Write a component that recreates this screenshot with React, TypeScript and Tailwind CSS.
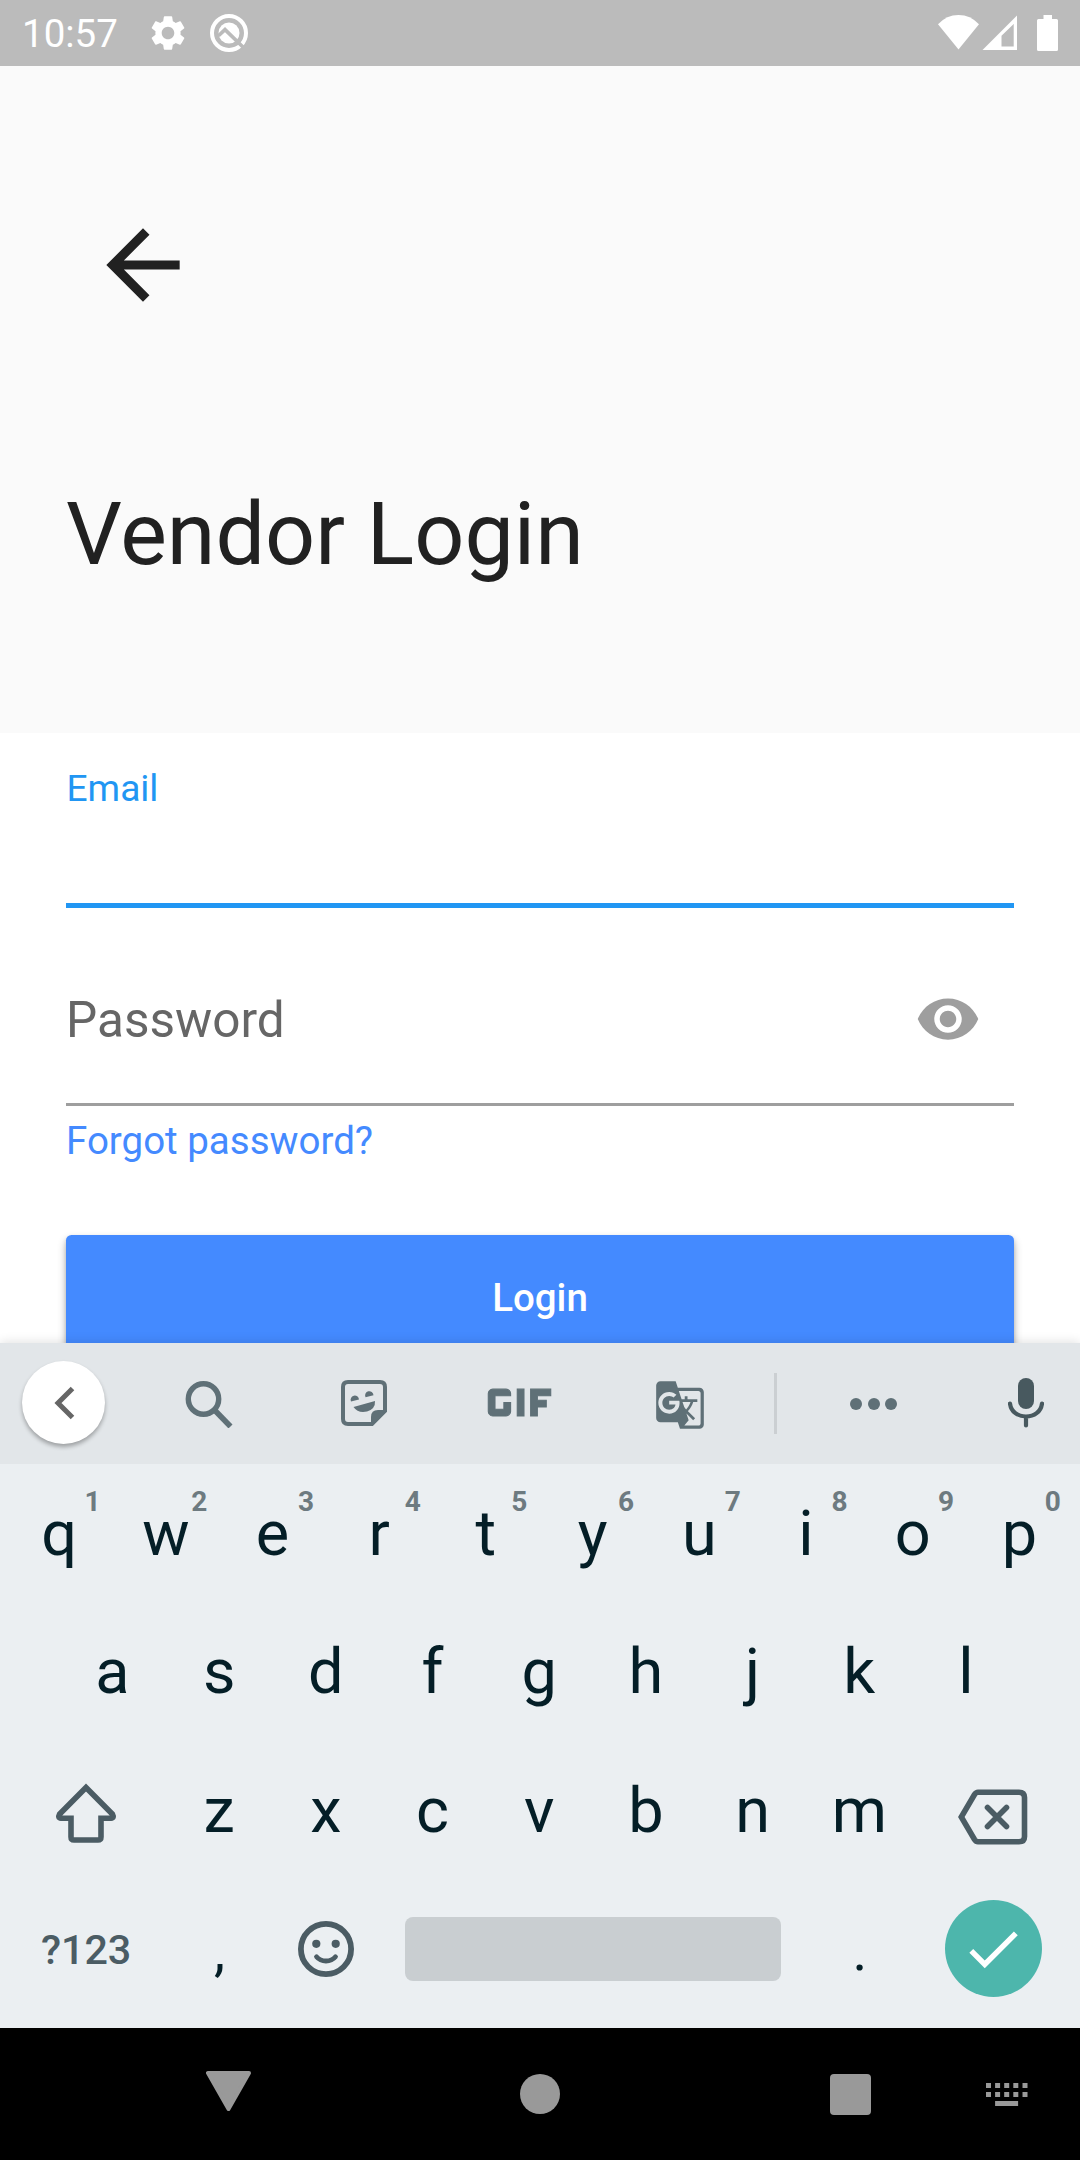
import type { ReactNode } from "react";
import { MdArrowBack, MdDone, MdGTranslate, MdGif, MdSettings, MdVisibility } from "react-icons/md";

const TOP_ROW = ["q", "w", "e", "r", "t", "y", "u", "i", "o", "p"];
const HINTS = ["1", "2", "3", "4", "5", "6", "7", "8", "9", "0"];
const HOME_ROW = ["a", "s", "d", "f", "g", "h", "j", "k", "l"];
const BOTTOM_ROW = ["z", "x", "c", "v", "b", "n", "m"];

function Key({ label, hint }: { label: string; hint?: string }) {
  return (
    <button className="relative flex h-full w-[106.7px] items-center justify-center text-[63px] leading-none text-[#041e27]">
      {label}
      {hint && (
        <span className="absolute left-1/2 top-[24px] ml-[18.5px] w-[30px] text-center text-[28px] font-bold leading-none text-[#6d7a80]">
          {hint}
        </span>
      )}
    </button>
  );
}

function PunctuationKey({ label }: { label: string }) {
  return (
    <button className="flex h-full w-[106.7px] items-center justify-center pl-px pt-[5px] text-[56px] leading-none text-[#041e27]">
      {label}
    </button>
  );
}

function KeyRow({ children }: { children: ReactNode }) {
  return <div className="flex h-[138.5px] items-center justify-center pr-[1.5px]">{children}</div>;
}

function StatusBar() {
  return (
    <header className="flex h-[66px] items-center bg-[#bbbbbb] pl-[22px] pr-[21px] text-white">
      <span className="pt-[3px] text-[38.5px] leading-none">10:57</span>
      <MdSettings className="ml-[29.5px] size-[42px]" />
      <svg className="ml-[19.5px] size-[40px]" viewBox="0 0 40 40">
        <circle cx="20" cy="20" r="17" fill="none" stroke="currentColor" strokeWidth="4" />
        <circle cx="20" cy="20" r="10.5" fill="currentColor" />
        <path d="M9.5 22.8L16 16.6L36 36" fill="none" stroke="#bbbbbb" strokeWidth="3.6" />
      </svg>
      <svg className="ml-auto h-[36px] w-[121px]" viewBox="0 0 121 36">
        <path d="M0 9.3Q8.500 0 20.500 0T41 9.300L20.500 34.500Z" fill="currentColor" />
        <path
          fillRule="evenodd"
          d="M79 0.500V35H44.500ZM75.700 9L63.500 20.700V31.500H75.700Z"
          fill="currentColor"
        />
        <path
          d="M105.500 0H114V4H118.500Q120 4 120 5.500V34.500Q120 36 118.500 36H100.500Q99 36 99 34.500V5.500Q99 4 100.500 4H105.500Z"
          fill="currentColor"
        />
      </svg>
    </header>
  );
}

function LoginScreen() {
  return (
    <main className="h-[1277px] overflow-hidden">
      <section className="h-[667px] bg-[#fafafa] pl-[66px] pt-[144px] text-[#212121]">
        <button aria-label="Back" className="ml-[22px] block">
          <MdArrowBack className="size-[110px]" />
        </button>
        <h1 className="mt-[170px] text-[88px] leading-none">Vendor Login</h1>
      </section>
      <section className="px-[66px] pt-[37px]">
        <div className="h-[138px] border-b-[5.500px] border-[#2196f3]">
          <span className="block pl-[0.500px] text-[37.125px] leading-none text-[#2196f3]">Email</span>
        </div>
        <div className="flex h-[198px] justify-between border-b-[3px] border-[#9e9e9e] pr-[33px] pt-[78px]">
          <span className="mt-[10px] text-[49.500px] leading-none text-[#666666]">Password</span>
          <MdVisibility className="size-[66px] text-[#9e9e9e]" />
        </div>
        <a className="mt-[16px] block text-[38.500px] leading-none text-[#448aff]">Forgot password?</a>
        <button className="mt-[74px] flex h-[132px] w-full items-center justify-center rounded-[5.500px] bg-[#448aff] pb-[4px] text-[38.500px] font-medium leading-none text-white shadow-[0_5px_8px_rgba(0,0,0,0.3),0_2px_4px_rgba(0,0,0,0.12)]">
          Login
        </button>
      </section>
    </main>
  );
}

function Toolbar() {
  return (
    <div className="flex h-[121px] items-center bg-[#e2e6e9] text-[#5f7077]">
      <div className="flex w-[127px] justify-center pb-[2px]">
        <button className="flex size-[83px] items-center justify-center rounded-full bg-white text-[#666666] shadow-[0_3px_4px_rgba(0,0,0,0.3)]">
          <svg className="h-[34px] w-[22px]" viewBox="0 0 22 34">
            <path d="M19.500 2.500L5 17L19.500 31.500" fill="none" stroke="currentColor" strokeWidth="5" />
          </svg>
        </button>
      </div>
      <div className="flex w-[164px] justify-center">
        <svg className="size-[48px]" viewBox="0 0 48 48">
          <circle cx="18.500" cy="19" r="15.200" fill="none" stroke="currentColor" strokeWidth="5.400" />
          <path d="M30 30.500L45.500 46.500" fill="none" stroke="currentColor" strokeWidth="5.600" />
        </svg>
      </div>
      <div className="flex w-[146px] justify-center pb-px">
        <svg className="size-[46px]" viewBox="0 0 46 46">
          <path
            d="M7 2H39Q44 2 44 7V31L31 44H7Q2 44 2 39V7Q2 2 7 2Z"
            fill="none"
            stroke="currentColor"
            strokeWidth="4"
          />
          <path d="M30 45V37Q30 30 37 30H45V32L32 45Z" fill="currentColor" />
          <path d="M10 21.500A4.200 4.200 0 1 1 18 19.500ZM24.500 17.200A4.200 4.200 0 1 1 32.500 15.200Z" fill="currentColor" />
          <path d="M12.500 27L34 21Q34.500 29 26 31.500Q17 33.500 12.500 27Z" fill="currentColor" />
        </svg>
      </div>
      <div className="flex w-[166px] justify-center pb-[2px] pr-[2px]">
        <MdGif className="size-[107px] stroke-[0.25px] [&>path[fill=none]]:stroke-none" />
      </div>
      <div className="flex w-[154px] justify-center pt-[3px]">
        <MdGTranslate className="size-[52px]" />
      </div>
      <div className="ml-[17px] h-[61px] w-[3px] bg-[#cbcfd2]" />
      <div className="flex w-[193px] justify-center gap-[5.500px]">
        <span className="size-[12px] rounded-full bg-[#5f7077]" />
        <span className="size-[12px] rounded-full bg-[#5f7077]" />
        <span className="size-[12px] rounded-full bg-[#5f7077]" />
      </div>
      <div className="flex w-[110px] justify-center pb-px pl-[2px] text-[#48595f]">
        <svg className="h-[50px] w-[36px]" viewBox="0 0 36 50">
          <rect x="10" y="0" width="16" height="31" rx="8" fill="currentColor" />
          <path
            d="M2 25.500C3 34 10 38.500 18 38.500S33 34 34 25.500M18 38.500V47.500"
            fill="none"
            stroke="currentColor"
            strokeWidth="4.200"
            strokeLinecap="round"
          />
        </svg>
      </div>
    </div>
  );
}

function Keyboard() {
  return (
    <section className="relative h-[685px] bg-[#ebeff2] shadow-[0_-1px_10px_rgba(0,0,0,0.12)]">
      <Toolbar />
      <KeyRow>
        {TOP_ROW.map((k, i) => (
          <Key key={k} label={k} hint={HINTS[i]} />
        ))}
      </KeyRow>
      <KeyRow>
        {HOME_ROW.map((k) => (
          <Key key={k} label={k} />
        ))}
      </KeyRow>
      <KeyRow>
        <button aria-label="Shift" className="flex w-[160.200px] justify-center text-[#4b5c64]">
          <svg className="mt-[6px] h-[60px] w-[62px]" viewBox="0 0 62 60">
            <path
              d="M31 4.500L57.500 31.200Q59.500 35 56 35.200H46V54Q46 57 43 57H19Q16 57 16 54V35.200H6Q2.500 35 4.500 31.200Z"
              fill="none"
              stroke="currentColor"
              strokeWidth="5.600"
            />
          </svg>
        </button>
        {BOTTOM_ROW.map((k) => (
          <Key key={k} label={k} />
        ))}
        <button aria-label="Delete" className="flex w-[160.200px] justify-center text-[#4b5c64]">
          <svg className="mt-[13px] h-[56px] w-[70px]" viewBox="0 0 70 56">
            <path
              d="M20 3.200H61Q66.500 3.200 66.500 8.500V47.500Q66.500 52.800 61 52.800H20Q18 52.800 16.500 50.500L3.300 28L16.500 5.500Q18 3.200 20 3.200Z"
              fill="none"
              stroke="currentColor"
              strokeWidth="5.600"
            />
            <path d="M29.500 18.500L48.500 37.500M48.500 18.500L29.500 37.500" stroke="currentColor" strokeWidth="5.600" strokeLinecap="round" />
          </svg>
        </button>
      </KeyRow>
      <KeyRow>
        <button className="w-[160.200px] pl-px pt-[3px] text-center text-[41.250px] font-medium leading-none text-[#4b5c64]">?123</button>
        <PunctuationKey label="," />
        <button aria-label="Emoji" className="flex w-[106.700px] justify-center text-[#4b5c64]">
          <svg className="size-[56px]" viewBox="0 0 56 56">
            <circle cx="28" cy="28" r="25.100" fill="none" stroke="currentColor" strokeWidth="5.800" />
            <circle cx="18.300" cy="22.800" r="4.100" fill="currentColor" />
            <circle cx="37.700" cy="22.800" r="4.100" fill="currentColor" />
            <path d="M18.500 35.800Q22 40 28 40T37.500 35.800" fill="none" stroke="currentColor" strokeWidth="4.800" strokeLinecap="round" />
          </svg>
        </button>
        <div className="flex w-[427px] justify-center">
          <div className="h-[64px] w-[376px] rounded-[8px] bg-[#c9ced1]" />
        </div>
        <PunctuationKey label="." />
        <div className="flex w-[160.200px] justify-center pl-[2px]">
          <button aria-label="Done" className="flex size-[97px] items-center justify-center rounded-full bg-[#4db6ac] pr-px text-white">
            <MdDone className="size-[66px]" />
          </button>
        </div>
      </KeyRow>
    </section>
  );
}

function NavBar() {
  return (
    <nav className="flex h-[132px] items-center bg-black pl-[206px] text-[#999999]">
      <svg className="-mt-[7px] h-[40px] w-[45px]" viewBox="0 0 45 40">
        <path d="M2 2H43L22.500 38Z" fill="currentColor" stroke="currentColor" strokeWidth="4" strokeLinejoin="round" />
      </svg>
      <div className="ml-[269px] size-[40px] rounded-full bg-[#999999]" />
      <div className="ml-[270px] mt-px size-[41px] rounded-[4px] bg-[#999999]" />
      <svg className="ml-[115px] mt-px h-[23px] w-[42px]" viewBox="0 0 42 23" fill="currentColor">
        {[0, 9.1, 18.200, 27.300, 36.500].map((x) => (
          <path key={x} d={`M${x} 0h5v5h-5zM${x} 9h5v5h-5z`} />
        ))}
        <rect x="9.100" y="18" width="23" height="5" />
      </svg>
    </nav>
  );
}

export default function App() {
  return (
    <div className="flex h-[2160px] w-[1080px] flex-col overflow-hidden bg-white font-['Roboto',sans-serif]">
      <StatusBar />
      <LoginScreen />
      <Keyboard />
      <NavBar />
    </div>
  );
}
